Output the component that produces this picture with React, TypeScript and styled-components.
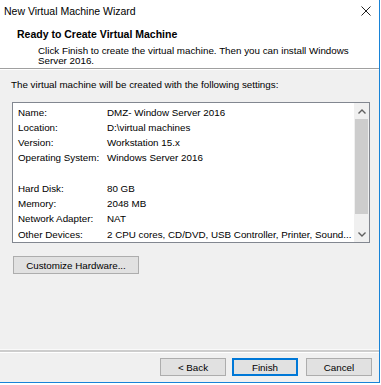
import React from 'react';
import styled, {createGlobalStyle} from "styled-components";

const GlobalStyle = createGlobalStyle`
    html, body {
        margin: 0;
        background: #fff;
    }
    body {
        font-family: "Liberation Sans", Arial, sans-serif;
        color: #000;
    }
`

const WindowFrame = styled.div`
    width: 380px;
    height: 383px;
    box-sizing: border-box;
    background: #f0f0f0;
    border-right: 1px solid #1883d7;
    border-bottom: 1px solid #1883d7;
    display: flex;
    flex-direction: column;
`

const Header = styled.div`
    background: #fff;
    height: 68px;
    border-bottom: 1px solid #a0a0a0;
    flex-shrink: 0;
`

const TitleBar = styled.div`
    height: 22px;
    padding: 0 8px 0 4px;
    display: flex;
    align-items: center;
    justify-content: space-between;
    font-size: 10.5px;
`

const Heading = styled.div`
    margin-top: 6px;
    padding-left: 17px;
    font-weight: bold;
    font-size: 10.5px;
    line-height: 13px;
`

const Description = styled.div`
    margin-top: 5px;
    padding-left: 38px;
    padding-right: 30px;
    font-size: 9.8px;
    line-height: 10px;
`

const Body = styled.div`
    flex: 1;
    border-top: 1px solid #fff;
    padding: 8px 11px 0 11px;
    font-size: 9.8px;
`

const Intro = styled.div`
    line-height: 13px;
`

const ListBox = styled.div`
    margin: 11px 0 0 1px;
    width: 358px;
    height: 141px;
    box-sizing: border-box;
    border: 1px solid #828790;
    background: #fff;
    display: flex;
`

const Rows = styled.div`
    flex: 1;
    padding: 1.5px 0 0 5px;
    display: grid;
    grid-template-columns: 89px 1fr;
    grid-auto-rows: 15.25px;
    align-items: center;
    overflow: hidden;
    white-space: nowrap;
`

const Scrollbar = styled.div`
    width: 15px;
    background: #f0f0f0;
    display: flex;
    flex-direction: column;
`

const ArrowButton = styled.div`
    height: 16px;
    display: flex;
    align-items: center;
    justify-content: center;
`

const Thumb = styled.div`
    height: 95px;
    margin: 0 1px;
    background: #cdcdcd;
`

const Track = styled.div`
    flex: 1;
`

const Button = styled.button<{ $primary?: boolean; $gap?: number }>`
    font-family: inherit;
    font-size: 9.8px;
    color: #000;
    height: 18px;
    width: ${p => p.$primary !== undefined ? 66 : 66}px;
    margin-left: ${p => p.$gap || 0}px;
    padding: 0;
    background: #e1e1e1;
    border: 1px solid ${p => p.$primary ? '#0078d7' : '#adadad'};
    box-shadow: ${p => p.$primary ? 'inset 0 0 0 1px #0078d7' : 'none'};
    border-radius: 0;
`

const HardwareButton = styled(Button)`
    width: 126px;
    margin: 13px 0 0 2px;
`

const Separator = styled.div`
    border-top: 1px solid #fafafa;
    border-bottom: 1px solid #fff;
    height: 2px;
    background: #cdcdcd;
    flex-shrink: 0;
`

const Footer = styled.div`
    display: flex;
    justify-content: flex-end;
    padding: 5px 7px 6px 0;
`

const settings: [string, string][] = [
    ["Name:", "DMZ- Window Server 2016"],
    ["Location:", "D:\\virtual machines"],
    ["Version:", "Workstation 15.x"],
    ["Operating System:", "Windows Server 2016"],
    ["", ""],
    ["Hard Disk:", "80 GB"],
    ["Memory:", "2048 MB"],
    ["Network Adapter:", "NAT"],
    ["Other Devices:", "2 CPU cores, CD/DVD, USB Controller, Printer, Sound..."],
]

function Chevron(props: { up?: boolean }) {
    return (
        <svg width="8" height="5" viewBox="0 0 8 5">
            <path d={props.up ? "M0.5 4.5 L4 1 L7.5 4.5" : "M0.5 0.5 L4 4 L7.5 0.5"}
                  fill="none" stroke="#606060" strokeWidth="1.4"/>
        </svg>
    );
}

export default function App() {

    return (
        <WindowFrame>
            <GlobalStyle/>
            <Header>
                <TitleBar>
                    <span>New Virtual Machine Wizard</span>
                    <svg width="10" height="10" viewBox="0 0 10 10">
                        <path d="M0.5 0.5 L9.5 9.5 M9.5 0.5 L0.5 9.5" stroke="#222" strokeWidth="1"/>
                    </svg>
                </TitleBar>
                <Heading>Ready to Create Virtual Machine</Heading>
                <Description>
                    Click Finish to create the virtual machine. Then you can install Windows Server 2016.
                </Description>
            </Header>
            <Body>
                <Intro>The virtual machine will be created with the following settings:</Intro>
                <ListBox>
                    <Rows>
                        {settings.map(([label, value], i) => (
                            <React.Fragment key={i}>
                                <span>{label}</span>
                                <span>{value}</span>
                            </React.Fragment>
                        ))}
                    </Rows>
                    <Scrollbar>
                        <ArrowButton><Chevron up/></ArrowButton>
                        <Thumb/>
                        <Track/>
                        <ArrowButton><Chevron/></ArrowButton>
                    </Scrollbar>
                </ListBox>
                <HardwareButton>Customize Hardware...</HardwareButton>
            </Body>
            <Separator/>
            <Footer>
                <Button>&lt; Back</Button>
                <Button $primary $gap={6}>Finish</Button>
                <Button $gap={8}>Cancel</Button>
            </Footer>
        </WindowFrame>

    );

}
